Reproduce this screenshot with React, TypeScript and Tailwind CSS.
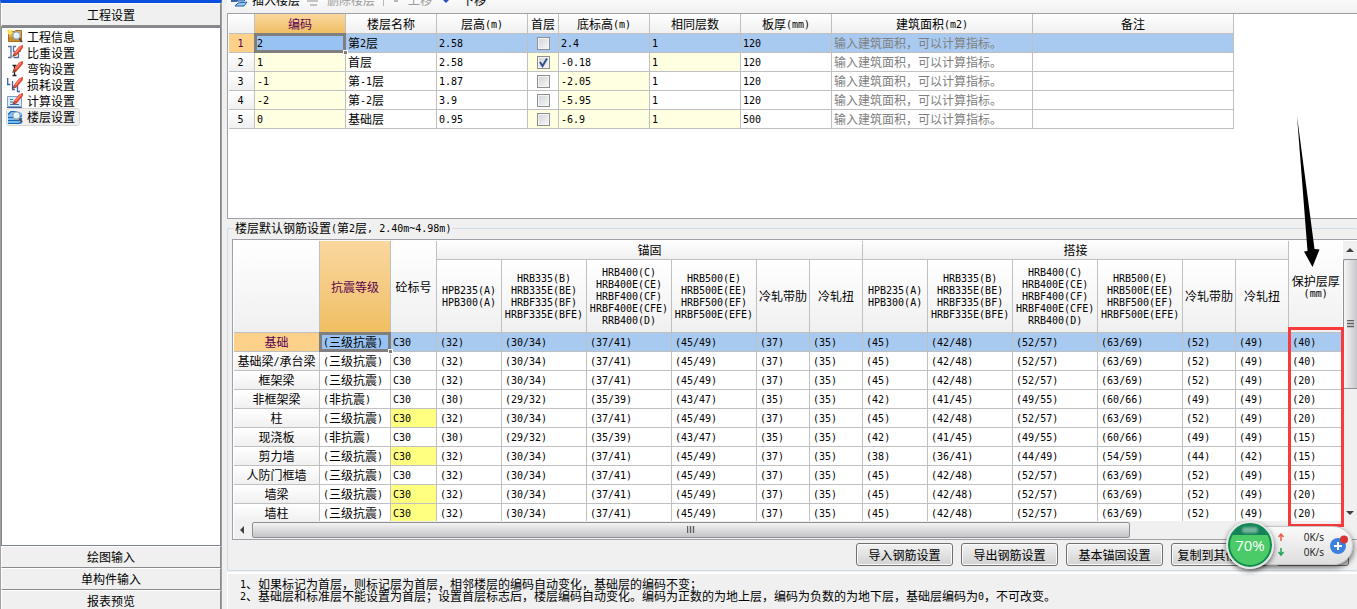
import type { ReactNode } from "react";
import clsx from "clsx";

const cjk = "font-['Noto_Sans_CJK_SC',sans-serif]";

// Latin runs are half the width of a Chinese character.
function Txt({ children }: { children: string }) {
  return (
    <>
      {children.split(/([\x20-\x7e]+)/).map((part, i) =>
        i % 2 ? (
          <span key={i} className="align-[1px] font-['DejaVu_Sans_Mono',monospace] text-[10px] leading-none">
            {part}
          </span>
        ) : (
          part
        ),
      )}
    </>
  );
}

function Pen() {
  return (
    <>
      <path d="M6.5 8.5 12 1.5 15.500 0 16 .5 15.8 3 9.5 10.500z" fill="#e8402c" />
      <path d="M8.5 8 14 1.5" stroke="#ff8a70" strokeWidth="1.4" />
      <path d="M5 12 6.5 8.5 9.5 10.500z" fill="#8a4a3a" />
    </>
  );
}

function Lens() {
  return (
    <>
      <path d="m12 9 3 4" stroke="#5a4a3a" strokeWidth="2" />
      <circle cx="9.5" cy="6.5" r="3.6" fill="#e4f2fc" stroke="#8fa2b8" strokeWidth="1.2" />
      <path d="M7.5 6a2 2 0 0 1 2-1.7" stroke="#fff" fill="none" />
    </>
  );
}

function ItemIcon({ children }: { children: ReactNode }) {
  return (
    <svg viewBox="0 0 16 16" className="size-4 shrink-0" fill="none" aria-hidden="true">
      {children}
    </svg>
  );
}

const treeItems = [
  {
    label: "工程信息",
    icon: (
      <>
        <path d="M1.500 2.500h6l1-1h6v11h-13z" fill="#e0aa48" stroke="#a87020" />
        <path d="M2 8h12v4H2z" fill="#c98c30" />
        <path d="M3 0v6M0 3h6M1 1l4 4M5 1 1 5" stroke="#fbe45c" strokeWidth="1.2" />
        <Lens />
      </>
    ),
  },
  {
    label: "比重设置",
    icon: (
      <>
        <path d="M1 1.500h3v11H1M9 1.500H6.500v5H8M9 12.500H6.500M14 6h-2M11.500 7v5.500H9" stroke="#5470a0" strokeWidth="1.3" />
        <Pen />
      </>
    ),
  },
  {
    label: "弯钩设置",
    icon: (
      <>
        <path d="M5.500 4.500h4M7.500 5v9M6 9.500h3M5.500 14.500h4" stroke="#202020" strokeWidth="1.3" />
        <Pen />
      </>
    ),
  },
  {
    label: "损耗设置",
    icon: (
      <>
        <path d="M.7 1v6.500h2.600M5.500 4v8.500h2.500M10.500 9v5.500H13" stroke="#3f62a8" strokeWidth="1.3" />
        <Pen />
      </>
    ),
  },
  {
    label: "计算设置",
    icon: (
      <>
        <path d="M.5 3.500h14v10H.5z" fill="#dcebfa" stroke="#7ca2d0" />
        <path d="M3 6.500h3M3 9h3M3 11.500h9" stroke="#3f74b8" />
        <path d="M0 14.500h15" stroke="#3c64a0" />
        <Pen />
      </>
    ),
  },
  {
    label: "楼层设置",
    icon: (
      <>
        <path d="M3 3h9l3 1v11H1V5z" fill="#7cbcf0" />
        <path d="M1 5.500 4 2.500h6M1 8.500h11l3-2M1 11.500h11l3-2M1 14.500h11l3-2" stroke="#1668b8" strokeWidth="1.2" />
        <Lens />
      </>
    ),
  },
];

function Sidebar() {
  const bar = "shrink-0 border border-t-white border-l-white border-r-[#8a8a8a] border-b-[#8a8a8a] bg-[#f0f0f0] text-center";
  return (
    <aside className="-mb-[3px] flex w-[222px] shrink-0 flex-col border-x border-[#a0a0a0] border-t-[3px] border-t-[#0a50dc]">
      <button type="button" className={clsx(bar, "h-6 border-b-2")}>
        工程设置
      </button>
      <nav className="flex-1 border border-[#7f858f] bg-white pt-px pl-[5px]">
        {treeItems.map((item, i) => (
          <a
            key={item.label}
            href="#"
            className={clsx(
              "flex h-4 w-[72px] items-center gap-1 leading-4",
              i === 5 && "rounded-xs bg-[#f0f0f0] outline outline-[#d8d8d8]",
            )}
          >
            <ItemIcon>{item.icon}</ItemIcon>
            <span className="whitespace-nowrap">{item.label}</span>
          </a>
        ))}
      </nav>
      {["绘图输入", "单构件输入", "报表预览"].map((label) => (
        <button key={label} type="button" className={clsx(bar, "h-[22px]")}>
          {label}
        </button>
      ))}
    </aside>
  );
}

function Toolbar() {
  return (
    <div className="h-[13px] overflow-hidden bg-linear-to-b from-[#fafafa] to-[#f0f0f0]">
      <div className="-mt-3 flex h-6 items-center pl-1 leading-6">
        <button type="button" className="flex items-center gap-1">
          <svg viewBox="0 0 17 14" className="h-3.5 w-[17px]" fill="none" aria-hidden="true">
            <path d="M1 1v7h5" stroke="#3c64a0" strokeWidth="2" />
            <path d="m8 6 8-1-3 3H6zM7 10l9-1-3 4H4z" fill="#9ccaf4" stroke="#1c5ea8" />
          </svg>
          插入楼层
        </button>
        <button type="button" disabled className="ml-[7px] flex items-center gap-2 text-[#9a9a9a]">
          <svg viewBox="0 0 12 14" className="h-3.5 w-3" fill="none" aria-hidden="true">
            <path d="M0 8h11M3 12h7" stroke="#b4b4b4" strokeWidth="1.5" />
          </svg>
          删除楼层
        </button>
        <span className="ml-2 h-3 w-px bg-[#b8b8b8]" />
        <button type="button" disabled className="ml-2.5 flex items-center gap-2.5 text-[#9a9a9a]">
          <span className="size-1 bg-[#b8b8b8]" />
          上移
        </button>
        <button type="button" className="ml-2.5 flex items-center gap-3">
          <svg viewBox="0 0 8 8" className="size-2" aria-hidden="true">
            <path d="M0 3h8L4 7z" fill="#2a50c0" />
          </svg>
          下移
        </button>
      </div>
    </div>
  );
}

// Frame and fill handle of the active cell.
function CellFrame() {
  return (
    <>
      <span className="pointer-events-none absolute -inset-px border-3 border-[#7f7f7f]" />
      <span className="absolute -right-[3px] -bottom-[3px] z-10 size-[5px] border border-white bg-[#7f7f7f]" />
    </>
  );
}

const line = "border-r border-b border-[#c0c0c0]";
const headBg = "bg-linear-to-b from-white to-[#f0f0f0]";
const activeHead = "bg-linear-to-b from-[#fad79f] to-[#f0bf62] text-[#5a0050]";

const floorWidths = ["w-[26px]", "w-[91px]", "w-[91px]", "w-[91px]", "w-[31px]", "w-[91px]", "w-[91px]", "w-[91px]", "w-[201px]", "w-[201px]"];
const floorHeads = ["", "编码", "楼层名称", "层高(m)", "首层", "底标高(m)", "相同层数", "板厚(mm)", "建筑面积(m2)", "备注"];

// tint lists the cells of a row that are shown in light yellow
const floors = [
  { code: "2", name: "第2层", height: "2.58", first: false, base: "2.4", same: "1", slab: "120", tint: "" },
  { code: "1", name: "首层", height: "2.58", first: true, base: "-0.18", same: "1", slab: "120", tint: "code first same" },
  { code: "-1", name: "第-1层", height: "1.87", first: false, base: "-2.05", same: "1", slab: "120", tint: "code base" },
  { code: "-2", name: "第-2层", height: "3.9", first: false, base: "-5.95", same: "1", slab: "120", tint: "code base" },
  { code: "0", name: "基础层", height: "0.95", first: false, base: "-6.9", same: "1", slab: "500", tint: "code first base same" },
];

function FloorTable() {
  return (
    <div className="h-[206px] overflow-hidden border-y border-l border-[#a0a0a8] bg-white pl-px">
      <table className="w-[1005px] table-fixed border-separate border-spacing-0">
        <colgroup>
          {floorWidths.map((w, i) => (
            <col key={i} className={w} />
          ))}
        </colgroup>
        <thead>
          <tr>
            {floorHeads.map((h, i) => (
              <th key={i} className={clsx("h-5 p-0 font-normal whitespace-nowrap", line, i === 1 ? activeHead : headBg)}>
                <Txt>{h}</Txt>
              </th>
            ))}
          </tr>
        </thead>
        <tbody>
          {floors.map((f, row) => {
            const cell = (key: string) =>
              clsx("h-[19px] p-0 pl-0.5 whitespace-nowrap", line, f.tint.split(" ").includes(key) && "bg-[#ffffe1]");
            return (
              <tr key={f.code} className={clsx(row === 0 && "bg-[#a8caf0]")}>
                <th
                  className={clsx("h-[19px] p-0 pr-0.5 font-normal", line, row === 0 ? "bg-[#fdd18a] text-[#5a0050]" : headBg)}
                >
                  <Txt>{String(row + 1)}</Txt>
                </th>
                <td className={clsx(cell("code"), row === 0 && "relative bg-[#97c2f2]")}>
                  <Txt>{f.code}</Txt>
                  {row === 0 && <CellFrame />}
                </td>
                <td className={cell("name")}>
                  <Txt>{f.name}</Txt>
                </td>
                <td className={cell("height")}>
                  <Txt>{f.height}</Txt>
                </td>
                <td className={clsx(cell("first"), "pr-0.5")}>
                  <label className="relative mx-auto block size-[13px]">
                    <input
                      type="checkbox"
                      aria-label={f.name}
                      defaultChecked={f.first}
                      className="peer block size-[13px] appearance-none border border-[#8e8f8f] bg-linear-to-br from-[#cfd3d8] to-[#f8f8f8] shadow-[inset_0_0_0_1px_#f4f4f4]"
                    />
                    <svg
                      viewBox="0 0 13 13"
                      className="pointer-events-none absolute inset-0 hidden size-[13px] peer-checked:block"
                      fill="none"
                      aria-hidden="true"
                    >
                      <path d="m3 6 2.500 4L10 2.500" stroke="#33508c" strokeWidth="2" />
                    </svg>
                  </label>
                </td>
                <td className={cell("base")}>
                  <Txt>{f.base}</Txt>
                </td>
                <td className={cell("same")}>
                  <Txt>{f.same}</Txt>
                </td>
                <td className={cell("slab")}>
                  <Txt>{f.slab}</Txt>
                </td>
                <td className={clsx(cell("area"), "text-[#808080]")}>输入建筑面积，可以计算指标。</td>
                <td className={cell("note")} />
              </tr>
            );
          })}
        </tbody>
      </table>
    </div>
  );
}

const rebarWidths = [
  "w-[86px]", "w-[71px]", "w-[46px]",
  "w-[65px]", "w-[85px]", "w-[85px]", "w-[85px]", "w-[53px]", "w-[53px]",
  "w-[65px]", "w-[85px]", "w-[85px]", "w-[85px]", "w-[53px]", "w-[53px]",
  "w-[53px]",
];

const steelHeads = [
  ["HPB235(A)", "HPB300(A)"],
  ["HRB335(B)", "HRB335E(BE)", "HRBF335(BF)", "HRBF335E(BFE)"],
  ["HRB400(C)", "HRB400E(CE)", "HRBF400(CF)", "HRBF400E(CFE)", "RRB400(D)"],
  ["HRB500(E)", "HRB500E(EE)", "HRBF500(EF)", "HRBF500E(EFE)"],
  ["冷轧带肋"],
  ["冷轧扭"],
];

const normal = ["32", "30/34", "37/41", "45/49", "37", "35", "45", "42/48", "52/57", "63/69", "52", "49"];
const loose = ["30", "29/32", "35/39", "43/47", "35", "35", "42", "41/45", "49/55", "60/66", "49", "49"];
const wall = ["32", "30/34", "37/41", "45/49", "37", "35", "38", "36/41", "44/49", "54/59", "44", "42"];

const rebarRows = [
  { name: "基础", grade: "三级抗震", values: normal, cover: "40", marked: false },
  { name: "基础梁/承台梁", grade: "三级抗震", values: normal, cover: "40", marked: false },
  { name: "框架梁", grade: "三级抗震", values: normal, cover: "20", marked: false },
  { name: "非框架梁", grade: "非抗震", values: loose, cover: "20", marked: false },
  { name: "柱", grade: "三级抗震", values: normal, cover: "20", marked: true },
  { name: "现浇板", grade: "非抗震", values: loose, cover: "15", marked: false },
  { name: "剪力墙", grade: "三级抗震", values: wall, cover: "15", marked: true },
  { name: "人防门框墙", grade: "三级抗震", values: normal, cover: "15", marked: false },
  { name: "墙梁", grade: "三级抗震", values: normal, cover: "20", marked: true },
  { name: "墙柱", grade: "三级抗震", values: normal, cover: "20", marked: true },
];

function RebarTable() {
  const head = clsx("p-0 font-normal whitespace-nowrap leading-3", line);
  return (
    <table className="w-[1108px] table-fixed border-separate border-spacing-0">
      <colgroup>
        {rebarWidths.map((w, i) => (
          <col key={i} className={w} />
        ))}
      </colgroup>
      <thead>
        <tr>
          <th rowSpan={2} className={clsx(head, headBg)} />
          <th rowSpan={2} className={clsx(head, activeHead)}>抗震等级</th>
          <th rowSpan={2} className={clsx(head, headBg)}>砼标号</th>
          <th colSpan={6} className={clsx(head, headBg, "h-[19px]")}>锚固</th>
          <th colSpan={6} className={clsx(head, headBg, "h-[19px]")}>搭接</th>
          <th rowSpan={2} className={clsx(head, headBg, "border-r-0")}>
            保护层厚
            <br />
            <Txt>(mm)</Txt>
          </th>
        </tr>
        <tr>
          {[...steelHeads, ...steelHeads].map((lines, i) => (
            <th key={i} className={clsx(head, headBg, "h-[73px]")}>
              {lines.map((l) => (
                <span key={l} className="block h-3">
                  <Txt>{l}</Txt>
                </span>
              ))}
            </th>
          ))}
        </tr>
      </thead>
      <tbody>
        {rebarRows.map((r, row) => {
          const cell = clsx("h-[19px] p-0 whitespace-nowrap", line);
          return (
            <tr key={r.name} className={clsx(row === 0 && "bg-[#a8caf0]")}>
              <th className={clsx(cell, "font-normal", row === 0 ? "bg-[#fdd18a] text-[#5a0050]" : headBg)}>
                <Txt>{r.name}</Txt>
              </th>
              <td className={clsx(cell, "pl-[3px]", row === 0 && "relative bg-[#97c2f2]")}>
                <Txt>{`(${r.grade})`}</Txt>
                {row === 0 && <CellFrame />}
              </td>
              <td className={clsx(cell, "pl-0.5", r.marked && "bg-[#ffff80]")}>
                <Txt>C30</Txt>
              </td>
              {r.values.map((v, i) => (
                <td key={i} className={clsx(cell, "pl-[3px]")}>
                  <Txt>{`(${v})`}</Txt>
                </td>
              ))}
              <td className={clsx(cell, "border-r-0 pl-[3px]")}>
                <Txt>{`(${r.cover})`}</Txt>
              </td>
            </tr>
          );
        })}
      </tbody>
    </table>
  );
}

function RebarPanel() {
  return (
    <div className="relative ml-1 border-y border-l border-[#a0a0a8] bg-white pt-px pl-px">
      <div className="flex">
        <div className="h-[280px] min-w-0 flex-1 overflow-hidden">
          <RebarTable />
        </div>
        <div className="flex w-3.5 shrink-0 flex-col bg-[#f0f0f0]">
          <svg viewBox="0 0 14 18" className="h-[18px]" aria-hidden="true">
            <path d="M3 11h8L7 7z" fill="#404040" />
          </svg>
          <div className="flex h-[130px] items-center justify-center rounded-l-xs border-y border-l border-[#8e8e93] bg-linear-to-r from-[#f6f6f6] to-[#c8c8cc]">
            <svg viewBox="0 0 8 8" className="size-2" aria-hidden="true">
              <path d="M0 .5h7M0 3.500h7M0 6.500h7" stroke="#606060" strokeWidth="1.4" />
            </svg>
          </div>
          <svg viewBox="0 0 14 16" className="mt-auto h-4" aria-hidden="true">
            <path d="M3 6h8l-4 4z" fill="#404040" />
          </svg>
        </div>
      </div>
      <div className="flex h-[18px] bg-[#f0f0f0]">
        <svg viewBox="0 0 18 18" className="w-[18px]" aria-hidden="true">
          <path d="M10 5v8L6 9z" fill="#404040" />
        </svg>
        <div className="my-px flex w-[878px] items-center justify-center rounded-xs border border-[#8e8e93] bg-linear-to-b from-[#f4f4f4] to-[#c4c4c8]">
          <svg viewBox="0 0 8 8" className="size-2" aria-hidden="true">
            <path d="M.5 0v7M3.500 0v7M6.500 0v7" stroke="#606060" strokeWidth="1.4" />
          </svg>
        </div>
      </div>
      {/* annotation over the cover-thickness column */}
      <div className="pointer-events-none absolute top-[87px] left-[1055px] h-[200px] w-14 border-3 border-[#f93a3a]" />
      <svg viewBox="0 0 26 154" className="pointer-events-none absolute -top-[125px] left-[1062px] h-[154px] w-[26px]" aria-hidden="true">
        <path d="M2 1 19.500 134 24.500 134.500 17.500 152 9 136.500 12.500 136z" fill="#000" />
      </svg>
    </div>
  );
}

function PushButton({ children }: { children: string }) {
  return (
    <button
      type="button"
      className="h-[23px] w-[97px] rounded-[3px] border border-[#707070] bg-linear-to-b from-[#f2f2f2] to-[#d2d2d2] whitespace-nowrap shadow-[inset_0_0_0_1px_#fafafa]"
    >
      {children}
    </button>
  );
}

function SpeedBall() {
  return (
    <div className="absolute top-[521px] right-1 flex h-12 w-[127px] items-center font-['Open_Sans',sans-serif]">
      <div className="ml-6 flex h-[39px] flex-1 items-center rounded-r-full border border-[#c8c8c8] bg-linear-to-b from-[#fafafa] to-[#dedede] pr-1 pl-[26px] shadow-[1px_3px_5px_rgba(0,0,0,0.5)]">
        <svg viewBox="0 0 8 24" className="h-6 w-2" fill="none" aria-hidden="true">
          <path d="M4 8V2M1.500 4 4 1l2.500 3" stroke="#e8604c" strokeWidth="1.500" />
          <path d="M4 15v6M1.500 19 4 22l2.500-3" stroke="#22a45a" strokeWidth="1.500" />
        </svg>
        <div className="flex-1 pr-1.5 text-right text-[10px] leading-[15px] text-[#111]">
          <div>0K/s</div>
          <div>0K/s</div>
        </div>
        <svg viewBox="0 0 18 20" className="h-5 w-[18px]" fill="none" aria-hidden="true">
          <circle cx="8" cy="11" r="8" fill="#3c80de" />
          <path d="M8 7v8M4 11h8" stroke="#fff" strokeWidth="2" />
          <circle cx="14" cy="4.500" r="4" fill="#d83434" />
        </svg>
      </div>
      <div className="absolute left-0 flex size-12 items-center justify-center overflow-hidden rounded-full border-2 border-[#e6e6e6] bg-linear-to-b from-[#17805a] from-28% to-[#4acb68] to-28% text-[15px] text-white shadow-[0_2px_5px_rgba(0,0,0,0.6),inset_0_0_0_2px_#0f8a50]">
        <span className="absolute top-1 h-1.5 w-4 rounded-full bg-white/40 blur-[1px]" />
        70%
      </div>
    </div>
  );
}

export default function App() {
  return (
    <div className={clsx("relative flex h-screen min-h-[609px] overflow-hidden bg-[#f0f0f0] text-xs leading-3 text-black", cjk)}>
      <Sidebar />
      <main className="ml-[5px] flex min-w-0 flex-1 flex-col">
        <Toolbar />
        <FloorTable />
        <fieldset className="mt-[3px] min-w-0 rounded-xs border border-r-0 border-[#d0dce4] pb-1">
          <legend className="ml-1.5 px-px leading-3">
            <Txt>楼层默认钢筋设置(第2层, 2.40m~4.98m)</Txt>
          </legend>
          <div className="pt-[5px]">
            <RebarPanel />
          </div>
          <div className="flex justify-end gap-2 pt-[3px] pr-2">
            <PushButton>导入钢筋设置</PushButton>
            <PushButton>导出钢筋设置</PushButton>
            <PushButton>基本锚固设置</PushButton>
            <PushButton>复制到其他楼层</PushButton>
            <button
              type="button"
              aria-label="更多"
              className="h-[23px] w-[73px] rounded-[3px] border border-[#707070] bg-[#e4e4e4]"
            />
          </div>
        </fieldset>
        <div className="mt-px flex-1 border-t-2 border-l border-white pt-1 pl-3 leading-3 whitespace-nowrap">
          <p className="h-3">
            <Txt>1、如果标记为首层，则标记层为首层，相邻楼层的编码自动变化，基础层的编码不变；</Txt>
          </p>
          <p className="h-3">
            <Txt>2、基础层和标准层不能设置为首层；设置首层标志后，楼层编码自动变化。编码为正数的为地上层，编码为负数的为地下层，基础层编码为0，不可改变。</Txt>
          </p>
        </div>
      </main>
      <SpeedBall />
    </div>
  );
}
